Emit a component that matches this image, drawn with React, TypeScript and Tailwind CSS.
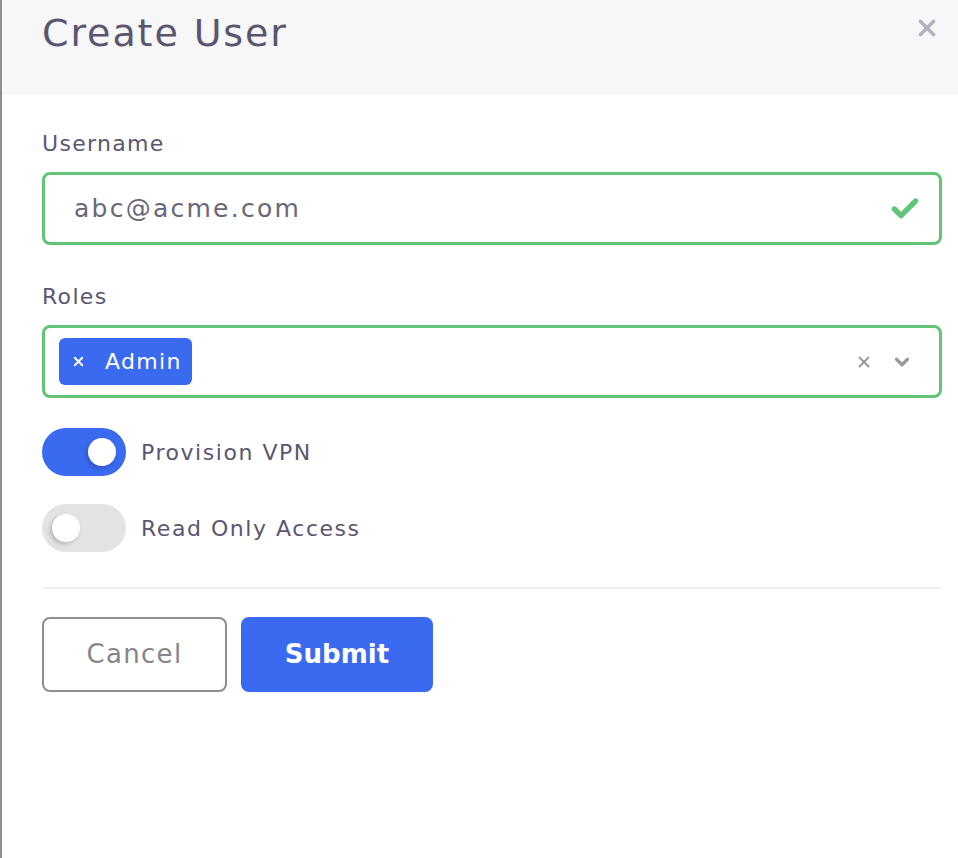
import { Check, ChevronDown, X } from 'lucide-react';

const font = { fontFamily: '"DejaVu Sans", "Open Sans", sans-serif' };

function Toggle({ on, label }: { on: boolean; label: string }) {
  return (
    <div className="flex items-center gap-[15px]">
      <div
        className={`flex h-[48px] w-[84px] items-center rounded-full px-[10px] ${
          on ? 'justify-end bg-[#3a6aef]' : 'justify-start bg-[#e3e3e3]'
        }`}
      >
        <div className="h-[28px] w-[28px] rounded-full bg-white shadow-[-2px_2px_4px_rgba(0,0,0,0.2)]" />
      </div>
      <span className="text-[22px] tracking-[0.07em] text-[#5b5670]">{label}</span>
    </div>
  );
}

export default function App() {
  return (
    <div className="h-[858px] w-full border-l-2 border-[#8e8e93] bg-white" style={font}>
      {/* header */}
      <div className="flex h-[95px] items-start justify-between bg-[#f7f7f7] pl-[40px] pr-[18px] pt-[10px]">
        <h1 className="text-[38px] leading-[46px] tracking-[0.05em] text-[#5a5570]">Create User</h1>
        <X size={26} strokeWidth={3.5} className="mt-[5px] text-[#b4b3bc]" />
      </div>

      <div className="pl-[40px] pr-[16px]">
        {/* username */}
        <div className="pt-[34px]">
          <label className="block text-[22px] leading-[30px] tracking-[0.06em] text-[#5b5670]">Username</label>
          <div className="mt-[13px] flex h-[73px] items-center justify-between rounded-[8px] border-[3px] border-[#62c476] pl-[29px] pr-[18px]">
            <span className="text-[25px] tracking-[0.09em] text-[#6a6679]">abc@acme.com</span>
            <Check size={32} strokeWidth={4} className="text-[#62c476]" />
          </div>
        </div>

        {/* roles */}
        <div className="pt-[37px]">
          <label className="block text-[22px] leading-[30px] tracking-[0.06em] text-[#5b5670]">Roles</label>
          <div className="mt-[13px] flex h-[73px] items-center justify-between rounded-[8px] border-[3px] border-[#62c476] pl-[14px] pr-[26px]">
            <div className="flex h-[47px] items-center gap-[19px] rounded-[6px] bg-[#3a6aef] pl-[12px] pr-[10px] text-white">
              <X size={15} strokeWidth={3} />
              <span className="text-[22px] tracking-[0.06em]">Admin</span>
            </div>
            <div className="flex items-center gap-[18px] text-[#9a9a9a]">
              <X size={18} strokeWidth={2.5} />
              <ChevronDown size={22} strokeWidth={3.5} />
            </div>
          </div>
        </div>

        {/* toggles */}
        <div className="flex flex-col gap-[28px] pt-[30px]">
          <Toggle on label="Provision VPN" />
          <Toggle on={false} label="Read Only Access" />
        </div>

        <div className="mt-[35px] h-[2px] bg-[#efefef]" />

        {/* actions */}
        <div className="flex gap-[14px] pt-[28px]">
          <button className="h-[75px] w-[185px] rounded-[8px] border-2 border-[#8e8e92] text-[26px] tracking-[0.05em] text-[#86868a]">
            Cancel
          </button>
          <button className="h-[75px] w-[192px] rounded-[8px] bg-[#3a6aef] text-[26px] font-semibold text-white">
            Submit
          </button>
        </div>
      </div>
    </div>
  );
}
